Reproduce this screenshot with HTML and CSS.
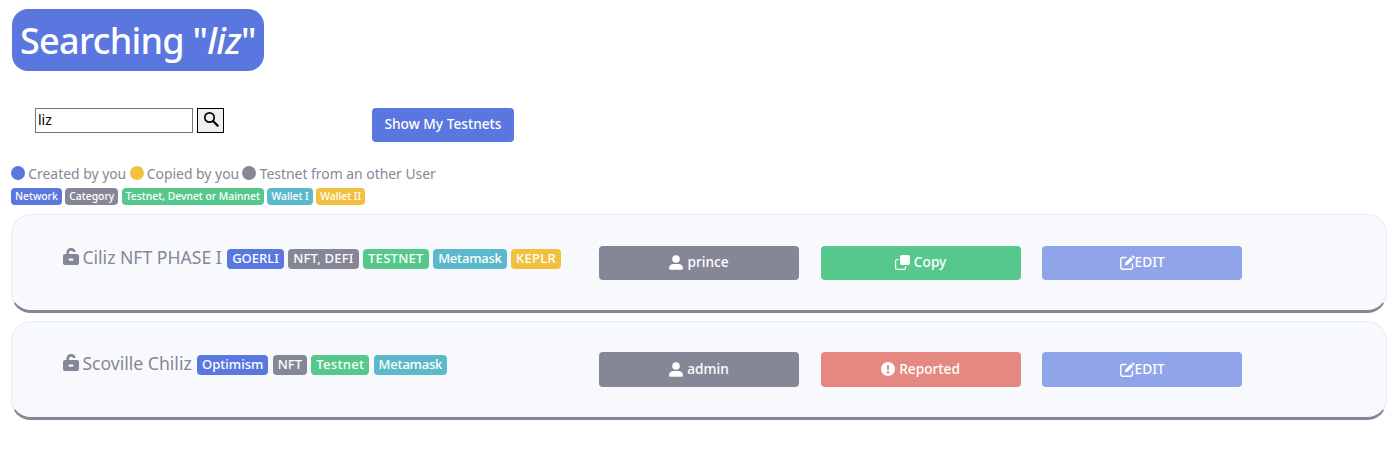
FILE: index.html
```html
<!DOCTYPE html>
<html>
<head>
    <title>Search Testnets</title>
    <link rel="stylesheet" href="styles.css">
</head>
<body>
    <h1 class="page-title">Searching "<em>liz</em>"</h1>

    <div class="search-row">
        <form class="search-form">
            <input class="search-input" type="text" value="liz">
            <button class="search-btn" type="button">
                <svg width="16" height="16" viewBox="0 0 16 16"><circle cx="6.500" cy="6.500" r="4.700" fill="none" stroke="#000" stroke-width="1.700"/><path d="M10 10l4.600 4.600" stroke="#000" stroke-width="2.200" stroke-linecap="round"/></svg>
            </button>
        </form>
        <a class="btn btn-blue btn-show">Show My Testnets</a>
    </div>

    <div class="legend">
        <span class="dot dot-blue"></span><span>Created by you</span>
        <span class="dot dot-yellow"></span><span>Copied by you</span>
        <span class="dot dot-gray"></span><span>Testnet from an other User</span>
    </div>
    <div class="legend-tags">
        <span class="tag tag-small blue">Network</span>
        <span class="tag tag-small gray">Category</span>
        <span class="tag tag-small green">Testnet, Devnet or Mainnet</span>
        <span class="tag tag-small teal">Wallet I</span>
        <span class="tag tag-small yellow">Wallet II</span>
    </div>

    <div class="card">
        <div class="card-title">
            <svg class="lock" width="16" height="17" viewBox="0 0 16 17"><path d="M0 8a2 2 0 0 1 2-2h1.500V4.600a4.600 4.600 0 0 1 9-1.300l.2.700h-2.600A2.200 2.200 0 0 0 6 4.600V6h8a2 2 0 0 1 2 2v7a2 2 0 0 1-2 2H2a2 2 0 0 1-2-2z" fill="#868796"/><rect x="5.500" y="10.500" width="5" height="2.200" rx="1.100" fill="#f8f9fd"/></svg>
            <span class="name">Ciliz NFT PHASE I</span>
            <span class="tag blue">GOERLI</span>
            <span class="tag tag-slight gray">NFT, DEFI</span>
            <span class="tag tag-wide green">TESTNET</span>
            <span class="tag tag-narrow teal">Metamask</span>
            <span class="tag tag-wide yellow">KEPLR</span>
        </div>
        <a class="btn btn-wide gray">
            <svg width="14" height="15" viewBox="0 0 14 15"><circle cx="7" cy="4" r="3.800" fill="#fff"/><path d="M0 13.500C0 10.500 2 9 4.500 9h5c2.500 0 4.500 1.500 4.500 4.500 0 .8-.6 1.300-1.300 1.300H1.300C.6 14.800 0 14.300 0 13.500z" fill="#fff"/></svg>
            prince
        </a>
        <a class="btn btn-wide green">
            <svg width="15" height="15" viewBox="0 0 15 15"><rect x="5" y="0" width="10" height="10" rx="1.800" fill="#fff"/><path d="M3.700 4.500H2A1.500 1.500 0 0 0 .6 6v7A1.500 1.500 0 0 0 2 14.400h7a1.500 1.500 0 0 0 1.500-1.500v-1.700" fill="none" stroke="#fff" stroke-width="1.200"/></svg>
            Copy
        </a>
        <a class="btn btn-wide btn-edit light-blue">
            <svg width="15" height="15" viewBox="0 0 15 15"><path d="M6.500 2.500H2.500A1.700 1.700 0 0 0 .8 4.200v8.300a1.700 1.700 0 0 0 1.700 1.700h8.300a1.700 1.700 0 0 0 1.700-1.700V8.500" fill="none" stroke="#fff" stroke-width="1.400"/><path d="M4.800 10.300l.5-2.800 5.500-5.500 2.300 2.300-5.500 5.500zM11.500 1.300l.6-.6a1 1 0 0 1 1.400 0l.9.9a1 1 0 0 1 0 1.400l-.6.600z" fill="#fff"/></svg>EDIT
        </a>
    </div>

    <div class="card card-tall">
        <div class="card-title">
            <svg class="lock" width="16" height="17" viewBox="0 0 16 17"><path d="M0 8a2 2 0 0 1 2-2h1.500V4.600a4.600 4.600 0 0 1 9-1.300l.2.700h-2.600A2.200 2.200 0 0 0 6 4.600V6h8a2 2 0 0 1 2 2v7a2 2 0 0 1-2 2H2a2 2 0 0 1-2-2z" fill="#868796"/><rect x="5.500" y="10.500" width="5" height="2.200" rx="1.100" fill="#f8f9fd"/></svg>
            <span class="name">Scoville Chiliz</span>
            <span class="tag blue">Optimism</span>
            <span class="tag gray">NFT</span>
            <span class="tag tag-wide green">Testnet</span>
            <span class="tag tag-narrow teal">Metamask</span>
        </div>
        <a class="btn btn-wide gray">
            <svg width="14" height="15" viewBox="0 0 14 15"><circle cx="7" cy="4" r="3.800" fill="#fff"/><path d="M0 13.500C0 10.500 2 9 4.500 9h5c2.500 0 4.500 1.500 4.500 4.500 0 .8-.6 1.300-1.300 1.300H1.300C.6 14.800 0 14.300 0 13.500z" fill="#fff"/></svg>
            admin
        </a>
        <a class="btn btn-wide red">
            <svg width="14" height="14" viewBox="0 0 14 14"><circle cx="7" cy="7" r="7" fill="#fff"/><rect x="6" y="3" width="2" height="5" rx="1" fill="#e5887f"/><circle cx="7" cy="10.200" r="1.200" fill="#e5887f"/></svg>
            Reported
        </a>
        <a class="btn btn-wide btn-edit light-blue">
            <svg width="15" height="15" viewBox="0 0 15 15"><path d="M6.500 2.500H2.500A1.700 1.700 0 0 0 .8 4.200v8.300a1.700 1.700 0 0 0 1.700 1.700h8.300a1.700 1.700 0 0 0 1.700-1.700V8.500" fill="none" stroke="#fff" stroke-width="1.400"/><path d="M4.800 10.300l.5-2.800 5.500-5.500 2.300 2.300-5.500 5.500zM11.500 1.300l.6-.6a1 1 0 0 1 1.400 0l.9.9a1 1 0 0 1 0 1.400l-.6.600z" fill="#fff"/></svg>EDIT
        </a>
    </div>
</body>
</html>
```

FILE: styles.css
```css
body { font-family: "Noto Sans", "Open Sans", sans-serif; margin: 0; padding: 9px 9px 0 11px; color: #868796; background: #fff; }

.page-title { display: inline-block; margin: 0 0 37px 1px; padding: 10px 8px 8px; background: #5a77df; color: #fff; font-size: 36px; line-height: 44px; font-weight: 500; border-radius: 16px; letter-spacing: -0.72px; }
.page-title em { font-style: italic; }

.search-row { display: flex; align-items: flex-start; padding-left: 24px; height: 51px; }
.search-form { display: flex; gap: 4px; width: 337px; }
.search-input { box-sizing: border-box; width: 158px; height: 25px; padding: 0 2px 2px; font-family: "Noto Sans", sans-serif; font-size: 14px; border: 1px solid #767676; color: #000; }
.search-btn { box-sizing: border-box; display: flex; justify-content: center; width: 27px; height: 25px; padding: 2px 0 0; background: #efefef; border: 1px solid #000; }

.btn { display: flex; align-items: center; justify-content: center; gap: 4px; box-sizing: border-box; padding-bottom: 3px; color: #fff; font-size: 13.700px; font-weight: 500; border-radius: 4px; }
.btn svg { margin-top: 2px; }
.btn-blue { background: #5a77df; }
.btn-show { width: 142px; height: 34px; }
.btn-wide { width: 200px; height: 34px; }
.btn-edit { gap: 0; }

.legend { display: flex; align-items: center; gap: 3.300px; height: 20px; font-size: 13.900px; margin-top: 4px; }
.dot { display: inline-block; width: 14px; height: 14px; border-radius: 50%; }
.dot-blue { background: #5a77df; }
.dot-yellow { background: #f0c03e; }
.dot-gray { background: #868796; }

.legend-tags { display: flex; gap: 3.500px; margin: 5px 0 9px; }

.tag { display: inline-block; padding: 0 5px; height: 20px; line-height: 19px; font-size: 13px; font-weight: 500; color: #fff; border-radius: 4px; white-space: nowrap; }
.tag-small { height: 17px; line-height: 16px; font-size: 10.350px; padding: 0 4px; }
.tag-slight { letter-spacing: 0.2px; }
.tag-wide { letter-spacing: 0.3px; }
.tag-narrow { letter-spacing: -0.2px; }

.blue { background: #5a77df; }
.gray { background: #868796; }
.green { background: #56c88c; }
.teal { background: #5bb9cb; }
.yellow { background: #f0c03e; }
.red { background: #e5887f; }
.light-blue { background: #90a4e9; }

.card { box-sizing: border-box; display: flex; align-items: flex-start; gap: 21.600px; height: 99px; margin-bottom: 8px; padding: 31px 0 0 51px; background: #f8f9fd; border: 1px solid #e3edfa; border-bottom: 3px solid #868796; border-radius: 20px; }
.card-tall { padding-top: 30px; }
.card-tall .btn-wide { height: 35px; }
.card-title { display: flex; align-items: center; gap: 4.400px; width: 514.400px; font-size: 17.600px; height: 24px; }
.card-title .tag { margin-top: 2px; }
.card-title .name { margin-bottom: 3px; margin-right: 1px; }
.lock { margin: -3px -1px 0 0; }
```
